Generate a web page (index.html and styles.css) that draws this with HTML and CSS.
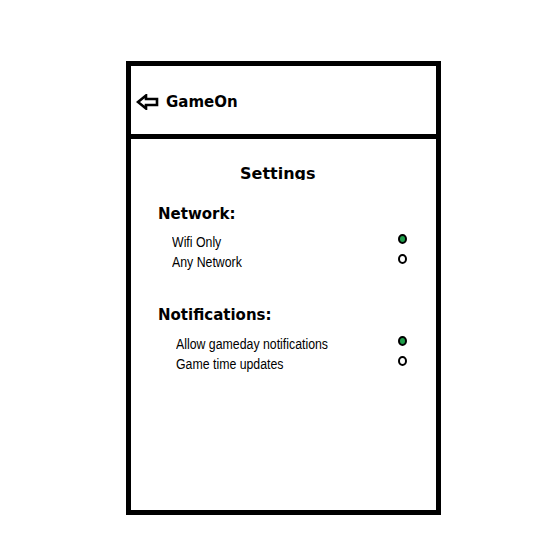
FILE: index.html
```html
<!DOCTYPE html>
<html>
<head>
<meta charset="utf-8">
<link rel="stylesheet" href="styles.css">
</head>
<body>
<div class="frame">
  <header class="header">
    <svg class="back" width="24" height="16" viewBox="0 0 24 16">
      <path d="M2 8 L10 1.5 L10 5 L21 5 L21 11 L10 11 L10 14.5 Z" fill="none" stroke="#000" stroke-width="2.6" stroke-linejoin="miter"/>
    </svg>
    <span class="brand">GameOn</span>
  </header>
  <main class="content">
    <div class="title">Settings</div>
    <section class="group group-network">
      <h2 class="group-title">Network:</h2>
      <div class="row"><span class="label">Wifi Only</span><span class="radio on"></span></div>
      <div class="row"><span class="label">Any Network</span><span class="radio"></span></div>
    </section>
    <section class="group group-notify">
      <h2 class="group-title">Notifications:</h2>
      <div class="row"><span class="label">Allow gameday notifications</span><span class="radio on"></span></div>
      <div class="row"><span class="label">Game time updates</span><span class="radio"></span></div>
    </section>
  </main>
</div>
</body>
</html>
```
FILE: styles.css
```css
html, body {
  margin: 0;
  padding: 0;
  background: #fff;
}
body {
  width: 555px;
  height: 555px;
  padding-top: 61px;
  padding-left: 126px;
  box-sizing: border-box;
}
.frame {
  width: 315px;
  height: 454px;
  border: 5px solid #000;
  box-sizing: border-box;
  display: flex;
  flex-direction: column;
}
.header {
  height: 73px;
  box-sizing: border-box;
  border-bottom: 5px solid #000;
  display: flex;
  align-items: center;
  padding-left: 5px;
  padding-top: 3px;
}
.back {
  display: block;
  margin-right: 6px;
}
.brand {
  font-family: "DejaVu Sans", sans-serif;
  font-weight: bold;
  font-size: 15px;
  line-height: 18px;
  color: #000;
}
.content {
  flex: 1;
  padding-top: 25px;
}
.title {
  font-family: "DejaVu Sans", sans-serif;
  font-weight: bold;
  font-size: 16px;
  line-height: 20px;
  height: 16px;
  overflow: hidden;
  padding-left: 109px;
}
.group-title {
  margin: 0;
  font-family: "DejaVu Sans", sans-serif;
  font-weight: bold;
  font-size: 15px;
  line-height: 18px;
  padding-left: 27px;
}
.group-network {
  margin-top: 25px;
}
.group-network .group-title {
  margin-bottom: 9px;
}
.group-network .row {
  padding-left: 41px;
}
.group-notify {
  margin-top: 34px;
}
.group-notify .group-title {
  margin-bottom: 10px;
}
.group-notify .row {
  padding-left: 45px;
}
.row {
  display: flex;
  justify-content: space-between;
  align-items: flex-start;
  height: 20px;
  padding-right: 29px;
  font-family: "Liberation Sans", Arial, sans-serif;
  font-size: 14px;
  line-height: 20px;
  color: #000;
}
.label {
  display: inline-block;
  transform: scaleX(0.88);
  transform-origin: left center;
  white-space: nowrap;
}
.radio {
  width: 9px;
  height: 10px;
  box-sizing: border-box;
  border: 2px solid #000;
  border-radius: 50%;
  margin-top: 2px;
  background: #fff;
}
.radio.on {
  background: #1e9e4a;
}
```
